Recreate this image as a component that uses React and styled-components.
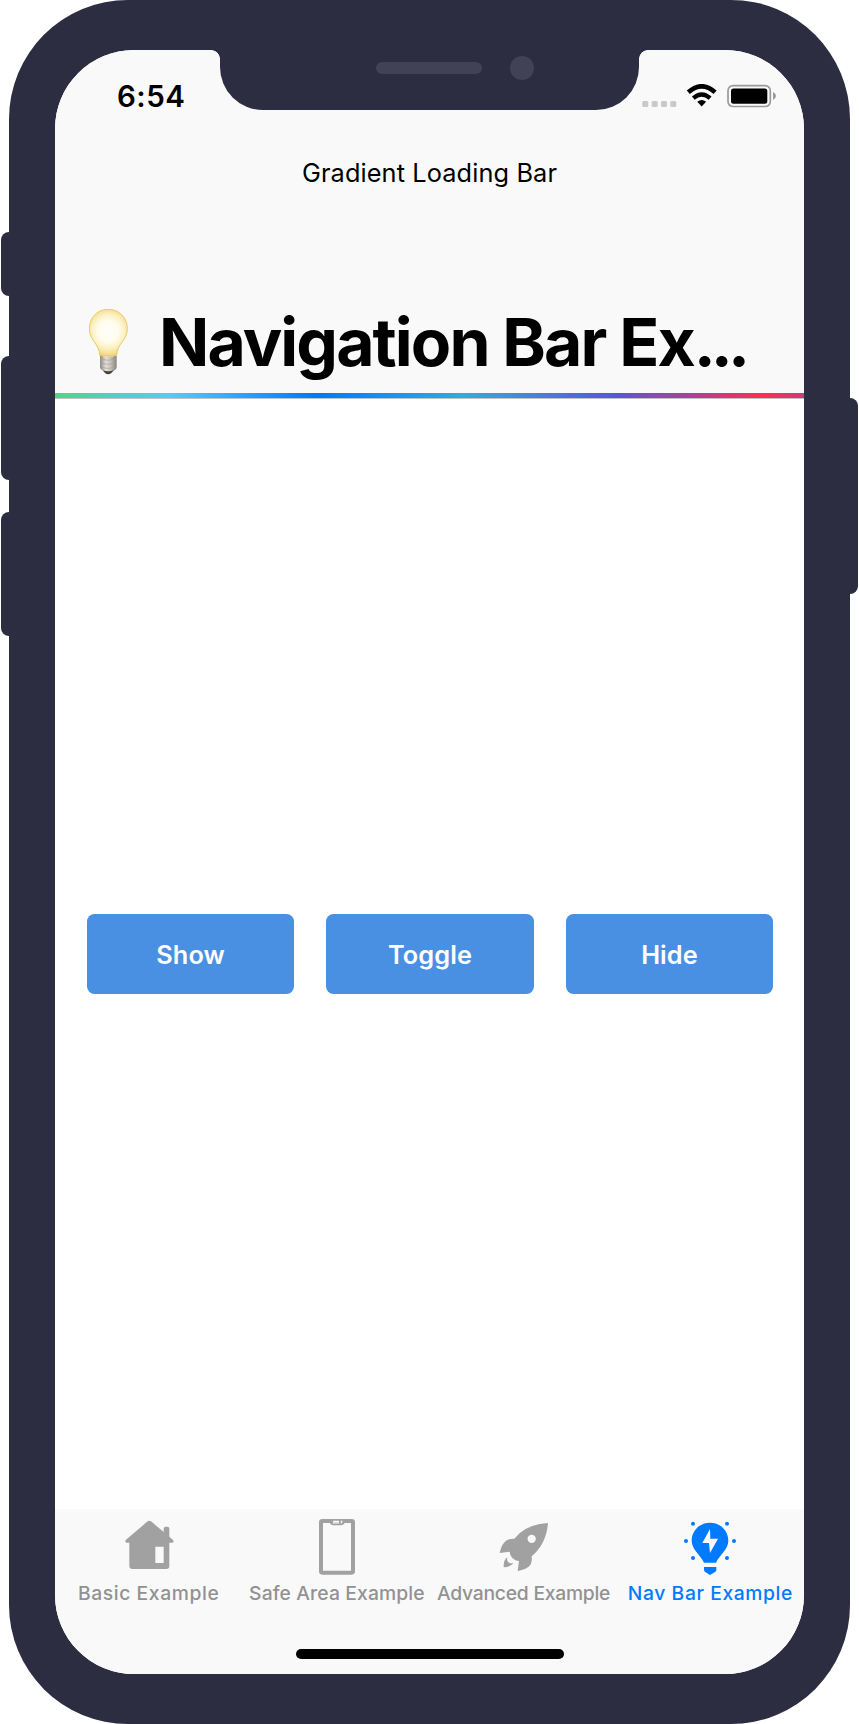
import React from 'react';
import styled, { createGlobalStyle } from 'styled-components';

const Global = createGlobalStyle`
  * { box-sizing: border-box; }
  body { margin: 0; background: #fff; font-family: Inter, "Liberation Sans", sans-serif; }
`;

const shell = '#2d2d42';

const Device = styled.div`
  display: flex;
  width: 859px;
  height: 1724px;
  padding-left: 1px;
`;
const Rail = styled.div`
  display: flex;
  flex-direction: column;
  flex: 0 0 8px;
  padding-top: ${(p) => p.$top}px;
`;
const SideKey = styled.div`
  width: 8px;
  height: ${(p) => p.$height}px;
  margin-bottom: ${(p) => p.$after || 0}px;
  border-radius: ${(p) => (p.$right ? '0 8px 8px 0' : '8px 0 0 8px')};
  background: ${shell};
`;
const Body = styled.div`
  flex: 0 0 841px;
  padding: 50px 46px;
  border-radius: 119px;
  background: ${shell};
`;
const Screen = styled.div`
  position: relative;
  display: flex;
  flex-direction: column;
  height: 1624px;
  border-radius: 79px;
  overflow: hidden;
  background: #fff;
`;
const Notch = styled.div`
  position: absolute;
  top: 0;
  left: 165px;
  width: 419px;
  height: 60px;
  border-radius: 0 0 43px 43px;
  background: ${shell};
  &::before, &::after {
    content: '';
    position: absolute;
    top: 0;
    width: 9px;
    height: 9px;
  }
  &::before { left: -9px; background: radial-gradient(circle at 0 100%, transparent 8.5px, ${shell} 9.3px); }
  &::after { right: -9px; background: radial-gradient(circle at 100% 100%, transparent 8.5px, ${shell} 9.3px); }
`;
const Sensors = styled.div`
  display: flex;
  align-items: center;
  gap: 28px;
  padding: 6px 0 0 156px;
`;
const Speaker = styled.div`
  width: 106px;
  height: 12px;
  border-radius: 6px;
  background: #424256;
`;
const Camera = styled.div`
  width: 24px;
  height: 24px;
  border-radius: 50%;
  background: #424256;
`;
const Header = styled.header`
  flex: 0 0 343px;
  background: #f9f9f9;
`;
const StatusBar = styled.div`
  display: flex;
  justify-content: space-between;
  height: 92px;
  padding: 0 28px 0 62px;
`;
const Time = styled.div`
  font-size: 29.5px;
  line-height: 36px;
  margin-top: 28px;
  font-weight: 600;
  letter-spacing: 0.5px;
`;
const Indicators = styled.svg`
  width: 134px;
  height: 24px;
  margin-top: 34px;
`;
const NavTitle = styled.div`
  height: 62px;
  line-height: 62px;
  text-align: center;
  font-size: 25.3px;
  letter-spacing: 0.12px;
  white-space: nowrap;
`;
const LargeTitle = styled.h1`
  display: flex;
  align-items: center;
  gap: 31px;
  height: 80px;
  margin: 98px 0 0;
  padding-left: 34px;
  font-size: 66px;
  font-weight: 700;
  line-height: 80px;
  letter-spacing: -1.9px;
  white-space: nowrap;
`;
const Ellipsis = styled.span`
  letter-spacing: -5px;
`;
const Emoji = styled.svg`
  flex: none;
  width: 39px;
  height: 66px;
`;
const LoadingBar = styled.div`
  flex: 0 0 6px;
  border-bottom: 1px solid #c3c3c6;
  background: linear-gradient(90deg, #4cd964 -33px, #5ac8fa 115px, #007aff 262px, #34aadc 410px, #5856d6 562px, #ff2d55 708px, #5856d6 857px);
`;
const Content = styled.main`
  display: flex;
  flex: 1;
  align-items: flex-start;
  gap: 32.3px;
  padding: 515px 31px 0 32px;
`;
const Button = styled.button`
  flex: 1;
  height: 80px;
  padding: 0;
  border: 0;
  border-radius: 7.5px;
  background: #4a90e2;
  color: #fff;
  font-family: inherit;
  font-size: 25.3px;
  font-weight: 600;
  letter-spacing: 0.1px;
`;
const TabBar = styled.footer`
  flex: 0 0 165.5px;
  background: #f9f9f9;
`;
const Tabs = styled.nav`
  display: flex;
  height: 140px;
`;
const Tab = styled.div`
  display: flex;
  flex: 1 1 0;
  min-width: 0;
  flex-direction: column;
  align-items: center;
  padding-top: 7.5px;
  color: ${(p) => (p.$active ? '#007aff' : '#929292')};
`;
const TabIcon = styled.svg`
  width: 60px;
  height: 60px;
  color: ${(p) => (p.$active ? '#007aff' : '#a1a1a1')};
`;
const TabLabel = styled.span`
  margin-top: 5px;
  padding-left: ${(p) => p.$inset || 0}px;
  font-size: 19.3px;
  line-height: 25px;
  font-weight: 500;
  letter-spacing: ${(p) => p.$track}px;
  white-space: nowrap;
`;
const HomeIndicator = styled.div`
  width: 268px;
  height: 10.5px;
  margin-left: 241px;
  border-radius: 5.5px;
  background: #000;
`;

const tabs = [
  {
    label: 'Basic Example', track: 0.6, viewBox: '206 48 180 180',
    icon: (
      <path fill="currentColor" fillRule="evenodd" d="M292 64q5-4 10 0L340 96V86q0-6 6-6h5q6 0 6 6V110L368 120q3 4 0 8h-11V198q0 9-9 9H246q-9 0-9-9V128H228q-6-4-1-9ZM315 140V189H340V140Z" />
    ),
  },
  {
    label: 'Safe Area Example', track: 0.12, inset: 2, viewBox: '768 48 180 180',
    icon: (
      <g fill="none" stroke="currentColor">
        <rect x="813" y="63" width="96" height="155" rx="4" strokeWidth="12" />
        <path d="M837 61l7 10q2 2 5 2h25q3 0 5-2l7-10M869.500 60V73" strokeWidth="5" />
        <path d="M849 65.500H867M872 65.500H877" stroke="#f9f9f9" strokeWidth="6" />
      </g>
    ),
  },
  {
    label: 'Advanced Example', track: -0.25, inset: 1, viewBox: '189 48 180 180',
    icon: (
      <g fill="currentColor">
        <path fillRule="evenodd" d="M354 69Q286 73 253 116Q233 115 222 128Q213 139 209 159L239 155Q241 170 250 176Q257 183 267 183L263 213Q290 209 301 195Q307 187 305 169Q349 132 354 69ZM305 104a12.500 12.500 0 1 1 0 25a12.500 12.500 0 1 1 0-25Z" />
        <path d="M232 171Q220 181 221 201Q239 204 251 188Q241 193 235 187Q229 181 232 171Z" />
      </g>
    ),
  },
  {
    label: 'Nav Bar Example', track: 0.6, viewBox: '751 48 180 180', active: true,
    icon: (
      <g fill="currentColor">
        <path fillRule="evenodd" d="M841 68C811 68 786 91 786 122C786 148 812 164 823 188H859C870 164 896 148 896 122C896 91 871 68 841 68ZM841 87L818 129H838L841 159L865 116H842Z" />
        <path d="M823 201H860V210Q860 214 856 216L841 225L827 216Q823 214 823 210Z" />
        <circle cx="790" cy="71.500" r="6" /><circle cx="892" cy="71.500" r="6" />
        <circle cx="769" cy="123" r="6" /><circle cx="913" cy="123" r="6" />
        <circle cx="790" cy="174" r="6" /><circle cx="892" cy="174" r="6" />
      </g>
    ),
  },
];

function Bulb() {
  return (
    <Emoji viewBox="146 56 120 198" preserveAspectRatio="none">
      <defs>
        <radialGradient id="glass" gradientUnits="userSpaceOnUse" cx="205" cy="123" r="76">
          <stop offset="0" stopColor="#fffefa" />
          <stop offset="0.38" stopColor="#fffdf0" />
          <stop offset="0.65" stopColor="#fcf2c7" />
          <stop offset="0.88" stopColor="#f6df94" />
          <stop offset="1" stopColor="#eecb70" />
        </radialGradient>
        <linearGradient id="metal">
          <stop offset="0" stopColor="#8b857d" />
          <stop offset="0.35" stopColor="#e5e1da" />
          <stop offset="0.65" stopColor="#c6c1b9" />
          <stop offset="1" stopColor="#847f78" />
        </linearGradient>
      </defs>
      <path d="M205 57C170 57 147 84 147 115C147 150 178 160 179 195Q205 201 231 195C232 160 264 150 264 115C264 84 241 57 205 57Z" fill="url(#glass)" stroke="#ecc964" strokeWidth="3" />
      <path d="M180 196Q205 202 231 196V233Q228 240 218 243H193Q183 240 180 233Z" fill="url(#metal)" />
      <path d="M181 207Q206 213 230 206M181 219Q206 225 230 218M182 231Q206 238 229 230" fill="none" stroke="#a39d95" strokeWidth="2" />
      <path d="M188 240Q205 246 223 240L214 249Q205 255 196 249Z" fill="#45423f" />
    </Emoji>
  );
}

export default function App() {
  return (
    <>
      <Global />
      <Device>
        <Rail $top={232}>
          <SideKey $height={64} $after={60} />
          <SideKey $height={124} $after={32} />
          <SideKey $height={124} />
        </Rail>
        <Body>
          <Screen>
            <Header>
              <StatusBar>
                <Time>6:54</Time>
                <Indicators viewBox="642 84 134 24">
                  <g fill="#c9c9c9">
                    {[642.3, 651.7, 661, 670.3].map((x) => (
                      <rect key={x} x={x} y="101" width="6" height="6" rx="1.500" />
                    ))}
                  </g>
                  <g fill="none" stroke="#000">
                    <path d="M688.300 92.300Q701.700 80.300 715.100 92.300" strokeWidth="4.600" />
                    <path d="M693.300 98.200Q701.700 90.800 710.100 98.200" strokeWidth="4.200" />
                  </g>
                  <path d="M697.300 101.800Q701.700 98.400 706.100 101.800L701.700 106.600Z" />
                  <rect x="728" y="85.700" width="42.300" height="20.800" rx="5" fill="none" stroke="#9a9a9a" strokeWidth="1.700" />
                  <rect x="731" y="88.500" width="36.300" height="15.200" rx="2.500" />
                  <path d="M773 92Q776 93.500 776 96T773 100Z" fill="#9a9a9a" />
                </Indicators>
              </StatusBar>
              <NavTitle>Gradient Loading Bar</NavTitle>
              <LargeTitle>
                <Bulb />
                <span>Navigation Bar Ex<Ellipsis>...</Ellipsis></span>
              </LargeTitle>
            </Header>
            <LoadingBar />
            <Content>
              <Button>Show</Button>
              <Button>Toggle</Button>
              <Button>Hide</Button>
            </Content>
            <TabBar>
              <Tabs>
                {tabs.map((t) => (
                  <Tab key={t.label} $active={t.active}>
                    <TabIcon viewBox={t.viewBox} $active={t.active}>{t.icon}</TabIcon>
                    <TabLabel $track={t.track} $inset={t.inset}>{t.label}</TabLabel>
                  </Tab>
                ))}
              </Tabs>
              <HomeIndicator />
            </TabBar>
            <Notch>
              <Sensors>
                <Speaker />
                <Camera />
              </Sensors>
            </Notch>
          </Screen>
        </Body>
        <Rail $top={398}>
          <SideKey $right $height={196} />
        </Rail>
      </Device>
    </>
  );
}
